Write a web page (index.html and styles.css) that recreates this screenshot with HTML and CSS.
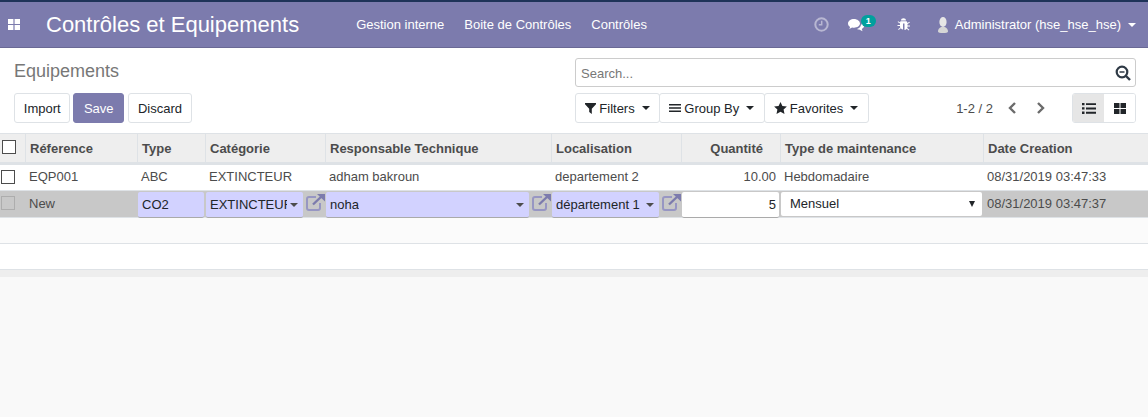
FILE: index.html

```html
<!DOCTYPE html>
<html lang="fr">
<head>
<meta charset="utf-8"/>
<title>Contrôles et Equipements</title>
<link rel="stylesheet" href="styles.css">
</head>
<body>
<header class="navbar">
  <svg class="apps-icon" width="12" height="11" viewBox="0 0 12 11"><path fill="#fff" d="M0 0h5.400v5H0zM6.600 0H12v5H6.600zM0 6h5.400v5H0zM6.600 6H12v5H6.600z"/></svg>
  <span class="brand">Contrôles et Equipements</span>
  <nav class="menu">
    <a>Gestion interne</a>
    <a>Boite de Contrôles</a>
    <a>Contrôles</a>
  </nav>
  <div class="systray">
    <svg class="tray-clock" width="15" height="15" viewBox="0 0 15 15"><circle cx="7.500" cy="7.500" r="6.200" fill="none" stroke="#b8b7d2" stroke-width="2"/><path d="M7.700 3.800v4H4.800" fill="none" stroke="#b8b7d2" stroke-width="1.500"/></svg>
    <span class="tray-chat">
      <svg width="16" height="14" viewBox="0 0 16 14"><path fill="#fff" d="M6 1C2.700 1 0 3 0 5.500c0 1.400.8 2.600 2.100 3.400L1.300 11l2.800-1.500c.6.100 1.300.2 1.900.2 3.300 0 6-2 6-4.200S9.300 1 6 1z"/><path fill="#fff" d="M13 6.500c0 2-1.600 3.700-4 4.400.7.400 1.400.6 2.200.6l3.300 1.700-.7-2.300c1.400-.7 2.200-1.700 2.200-2.900 0-1-.8-2-2.200-2.600.1.400.2.700.2 1.100z"/></svg>
      <span class="badge">1</span>
    </span>
    <svg class="tray-bug" width="13" height="13" viewBox="0 0 13 13"><path fill="#fff" d="M4 2.500C4 1.200 5.100.3 6.500.3S9 1.200 9 2.500zM3.500 3.300h6c.5.500.8 1 .9 1.700l2-1.300.5.800-2.400 1.600v1.500h2.500v1h-2.500c0 .5-.1 1-.3 1.400l2.200 1.700-.6.800-2.100-1.700c-.7.800-1.400 1.200-2.200 1.300V5.500H6v6.100c-.8-.1-1.500-.5-2.200-1.300l-2.100 1.700-.6-.8 2.200-1.700C3.100 9.100 3 8.600 3 8.100H.5v-1H3V5.600L.6 4l.5-.8 2 1.300c.1-.5.200-.9.400-1.200z"/></svg>
    <span class="user">
      <svg width="12" height="16" viewBox="0 0 12 16"><ellipse cx="6" cy="5" rx="3.600" ry="5" fill="#e6e6e6"/><path fill="#d6d6d6" d="M1 14.500c0-2.400 1.200-3.600 3.200-4.500h3.600c2 .9 3.200 2.100 3.200 4.500 0 1-2.200 1.500-5 1.500s-5-.5-5-1.500z"/></svg>
      <span>Administrator (hse_hse_hse)</span>
      <i class="caret caret-white"></i>
    </span>
  </div>
</header>

<section class="control-panel">
  <div class="cp-left">
    <h1 class="breadcrumb">Equipements</h1>
    <div class="cp-buttons">
      <button class="btn">Import</button>
      <button class="btn btn-primary">Save</button>
      <button class="btn">Discard</button>
    </div>
  </div>
  <div class="cp-right">
    <div class="searchbox">
      <span class="search-text">Search...</span>
      <svg width="16" height="16" viewBox="0 0 16 16"><circle cx="7" cy="7" r="5.300" fill="none" stroke="#2f3a46" stroke-width="2.200"/><path d="M4.500 7h5" stroke="#2f3a46" stroke-width="1.500"/><path d="M11 11l4 4" stroke="#2f3a46" stroke-width="2.400"/></svg>
    </div>
    <div class="cp-tools">
      <div class="btn-group">
        <button class="btn btn-tool">
          <svg width="11" height="11" viewBox="0 0 11 11"><path fill="#212529" d="M0 0h11v1.300L6.800 5.800V11L4.200 9V5.800L0 1.300z"/></svg>
          Filters <i class="caret"></i>
        </button>
        <button class="btn btn-tool">
          <svg width="12" height="10" viewBox="0 0 12 10"><path fill="#212529" d="M0 1h12v1.500H0zM0 4.300h12v1.500H0zM0 7.600h12v1.500H0z"/></svg>
          Group By <i class="caret"></i>
        </button>
        <button class="btn btn-tool">
          <svg width="13" height="12" viewBox="0 0 13 12"><path fill="#212529" d="M6.500 0l1.900 4 4.500.5-3.300 3 .9 4.500-4-2.300-4 2.300.9-4.500-3.300-3L4.600 4z"/></svg>
          Favorites <i class="caret"></i>
        </button>
      </div>
      <div class="pager">
        <span>1-2 / 2</span>
        <svg class="pager-prev" width="9" height="12" viewBox="0 0 9 12"><path d="M7 1L2 6l5 5" fill="none" stroke="#6b6b6b" stroke-width="2.400"/></svg>
        <svg class="pager-next" width="9" height="12" viewBox="0 0 9 12"><path d="M2 1l5 5-5 5" fill="none" stroke="#6b6b6b" stroke-width="2.400"/></svg>
      </div>
      <div class="view-switch">
        <button class="view-btn view-active">
          <svg width="14" height="11" viewBox="0 0 14 11"><path fill="#212529" d="M0 0h2.500v2.300H0zM4 .2h10v1.900H4zM0 4.300h2.500v2.300H0zM4 4.500h10v1.900H4zM0 8.600h2.500v2.300H0zM4 8.800h10v1.900H4z"/></svg>
        </button>
        <button class="view-btn">
          <svg width="12" height="11" viewBox="0 0 12 11"><path fill="#212529" d="M0 0h5.500v5H0zM6.500 0H12v5H6.500zM0 6h5.500v5H0zM6.500 6H12v5H6.500z"/></svg>
        </button>
      </div>
    </div>
  </div>
</section>

<table class="list">
  <colgroup>
    <col class="c-check"><col class="c-ref"><col class="c-type"><col class="c-cat"><col class="c-resp"><col class="c-loc"><col class="c-qty"><col class="c-maint"><col class="c-date">
  </colgroup>
  <thead>
    <tr>
      <th class="cell-check"><span class="checkbox"></span></th>
      <th>Réference</th>
      <th>Type</th>
      <th>Catégorie</th>
      <th>Responsable Technique</th>
      <th>Localisation</th>
      <th class="num">Quantité</th>
      <th>Type de maintenance</th>
      <th>Date Creation</th>
    </tr>
  </thead>
  <tbody>
    <tr class="row">
      <td class="cell-check"><span class="checkbox"></span></td>
      <td>EQP001</td>
      <td>ABC</td>
      <td>EXTINCTEUR</td>
      <td>adham bakroun</td>
      <td>departement 2</td>
      <td class="num">10.00</td>
      <td>Hebdomadaire</td>
      <td>08/31/2019 03:47:33</td>
    </tr>
    <tr class="row row-edit">
      <td class="cell-check"><span class="checkbox checkbox-off"></span></td>
      <td>New</td>
      <td class="field"><div class="required">CO2</div></td>
      <td class="field">
        <div class="m2o">
          <div class="required"><span class="clip">EXTINCTEUR</span><i class="caret caret-small"></i></div>
          <svg class="ext" width="19" height="17" viewBox="0 0 19 17"><use href="#ext-link"/></svg>
        </div>
      </td>
      <td class="field">
        <div class="m2o">
          <div class="required"><span class="clip">noha</span><i class="caret caret-small"></i></div>
          <svg class="ext" width="19" height="17" viewBox="0 0 19 17"><use href="#ext-link"/></svg>
        </div>
      </td>
      <td class="field">
        <div class="m2o">
          <div class="required"><span class="clip">département 1</span><i class="caret caret-small"></i></div>
          <svg class="ext" width="19" height="17" viewBox="0 0 19 17"><use href="#ext-link"/></svg>
        </div>
      </td>
      <td class="field"><div class="plain num">5</div></td>
      <td class="field"><div class="plain select"><span>Mensuel</span><i class="caret caret-select"></i></div></td>
      <td>08/31/2019 03:47:37</td>
    </tr>
    <tr class="row row-empty"><td colspan="9"></td></tr>
    <tr class="row row-empty row-white"><td colspan="9"></td></tr>
  </tbody>
  <tfoot>
    <tr><td colspan="9"></td></tr>
  </tfoot>
</table>

<svg class="defs" width="0" height="0">
  <symbol id="ext-link" viewBox="0 0 19 17">
    <path fill="none" stroke="#9796c3" stroke-width="2" d="M10 3H3C1.900 3 1 3.900 1 5v9c0 1.100.9 2 2 2h9c1.100 0 2-.9 2-2V9"/>
    <path fill="none" stroke="#7c7bad" stroke-width="2.400" d="M7 10.500L16 2"/>
    <path fill="#7c7bad" d="M11 0h8v7.500z"/>
  </symbol>
</svg>
</body>
</html>
```

FILE: styles.css

```css
* {
    box-sizing: border-box;
}
html, body {
    height: 100%;
}
body {
    margin: 0;
    background-color: #f9f9f9;
    color: #4c4c4c;
    font-family: "Liberation Sans", Arial, sans-serif;
    font-size: 13px;
    overflow: hidden;
}

/* top bar */
.navbar {
    display: flex;
    align-items: center;
    height: 48px;
    padding: 0 12px 0 8px;
    background-color: #7c7bad;
    border-top: 2px solid #1e3358;
    border-bottom: 1px solid #6a6995;
    color: #fff;
}
.apps-icon {
    flex: none;
}
.brand {
    margin-left: 26px;
    font-size: 22px;
}
.menu {
    display: flex;
    gap: 20px;
    margin-left: 57px;
}
.systray {
    display: flex;
    align-items: center;
    margin-left: auto;
}
.tray-chat {
    display: flex;
    position: relative;
    margin-left: 19px;
    margin-right: 33px;
}
.badge {
    position: absolute;
    left: 13px;
    top: -3px;
    width: 15px;
    height: 12px;
    border-radius: 6px;
    background-color: #00a09d;
    font-size: 9px;
    font-weight: bold;
    line-height: 12px;
    text-align: center;
}
.user {
    display: flex;
    align-items: center;
    gap: 6px;
    margin-left: 27px;
}
.caret {
    display: inline-block;
    border-top: 4px solid #212529;
    border-left: 4px solid transparent;
    border-right: 4px solid transparent;
}
.caret-white {
    margin-left: 1px;
    border-top-color: #fff;
}

/* control panel */
.control-panel {
    display: flex;
    justify-content: space-between;
    height: 86px;
    padding: 10px 12px 0 14px;
    background-color: #fff;
    border-bottom: 1px solid #dee2e6;
}
.breadcrumb {
    margin: 3px 0 0;
    color: #777;
    font-size: 18px;
    font-weight: normal;
    line-height: 21px;
}
.cp-buttons {
    display: flex;
    gap: 3px;
    margin-top: 11px;
}
.btn {
    height: 30px;
    padding: 0 8.8px;
    background-color: #fff;
    border: 1px solid #dee2e6;
    border-radius: 3px;
    color: #212529;
    font-family: inherit;
    font-size: 13px;
}
.btn-primary {
    margin-right: 1px;
    padding: 0 9.5px;
    background-color: #7c7bad;
    border-color: #7c7bad;
    color: #fff;
}
.cp-right {
    width: 561px;
}
.searchbox {
    display: flex;
    align-items: center;
    justify-content: space-between;
    height: 29px;
    padding: 0 4px 0 5px;
    border: 1px solid #ccc;
    border-radius: 3px;
}
.search-text {
    padding-top: 1px;
    color: #777;
}
.cp-tools {
    display: flex;
    align-items: center;
    margin-top: 6px;
}
.btn-group {
    display: flex;
}
.btn-tool {
    display: flex;
    align-items: center;
    gap: 3px;
    margin-right: -1px;
    padding: 0 9.3px;
}
.btn-tool .caret {
    margin-left: 4px;
}
.pager {
    display: flex;
    align-items: center;
    margin-left: auto;
}
.pager-prev {
    margin-left: 15px;
}
.pager-next {
    margin-left: 19px;
}
.view-switch {
    display: flex;
    margin-left: 27px;
    border: 1px solid #dee2e6;
    border-radius: 3px;
    overflow: hidden;
}
.view-btn {
    display: flex;
    align-items: center;
    justify-content: center;
    width: 31px;
    height: 28px;
    padding: 0;
    background-color: #fff;
    border: 0;
}
.view-active {
    background-color: #e6e6e6;
}

/* list */
.list {
    width: 100%;
    table-layout: fixed;
    border-collapse: separate;
    border-spacing: 0;
}
.c-check { width: 25px; }
.c-ref { width: 112px; }
.c-type { width: 68px; }
.c-cat { width: 120px; }
.c-resp { width: 226px; }
.c-loc { width: 130px; }
.c-qty { width: 99px; }
.c-maint { width: 203px; }
.list th {
    height: 31px;
    padding: 0 4px;
    background-color: #eee;
    border-bottom: 3px solid #dee2e6;
    border-left: 1px solid #dee2e6;
    color: #4c4c4c;
    font-weight: bold;
    text-align: left;
    white-space: nowrap;
}
.list th.cell-check {
    border-left: 0;
}
.list th.num {
    padding-right: 17px;
    text-align: right;
}
.list td {
    height: 26px;
    padding: 0 4px 3px;
    background-color: #fff;
    border-bottom: 1px solid #dee2e6;
    white-space: nowrap;
}
.list .num {
    text-align: right;
}
.list .cell-check {
    padding: 0 0 2px 1px;
}
.checkbox {
    display: block;
    width: 14px;
    height: 14px;
    background-color: #fff;
    border: 1px solid #4c4c4c;
}
th .checkbox {
    margin-left: 1px;
}
.checkbox-off {
    background-color: #c8c8c8;
    border-color: #adadad;
}
.row-edit td {
    height: 27px;
    padding-bottom: 1px;
    background-color: #c8c8c8;
    vertical-align: middle;
}
.list td.field {
    height: 27px;
    padding: 1px 0 0;
    vertical-align: top;
}
.required {
    display: flex;
    align-items: center;
    justify-content: space-between;
    height: 26px;
    margin: 0 1px -1px;
    padding: 0 4px;
    background-color: #d2d2ff;
    border-bottom: 1px solid #aaa;
    border-radius: 2px;
    color: #212529;
}
.m2o {
    display: flex;
    gap: 3px;
}
.m2o .required {
    flex: 1;
    min-width: 0;
    margin-right: 0;
}
.clip {
    overflow: hidden;
}
.caret-small {
    flex: none;
    margin-left: 3px;
    margin-right: 1px;
    border-top-color: #4c4c4c;
}
.ext {
    flex: none;
    margin-top: 2px;
}
.plain {
    height: 26px;
    margin: 0 1px -1px;
    padding: 0 3px;
    background-color: #fff;
    border-bottom: 1px solid #aaa;
    border-radius: 2px;
    color: #212529;
    line-height: 26px;
}
.select {
    display: flex;
    align-items: center;
    justify-content: space-between;
    height: 24px;
    margin-bottom: 0;
    padding: 0 7px 0 9px;
    border-bottom: 0;
}
.caret-select {
    border-top-width: 6px;
    border-left-width: 3px;
    border-right-width: 3px;
}
.row-empty td {
    background-color: #fbfbfb;
}
.row-white td {
    background-color: #fff;
}
.list tfoot td {
    height: 7px;
    padding: 0;
    background-color: #eee;
    border-bottom: 0;
}
.defs {
    position: absolute;
}
```
